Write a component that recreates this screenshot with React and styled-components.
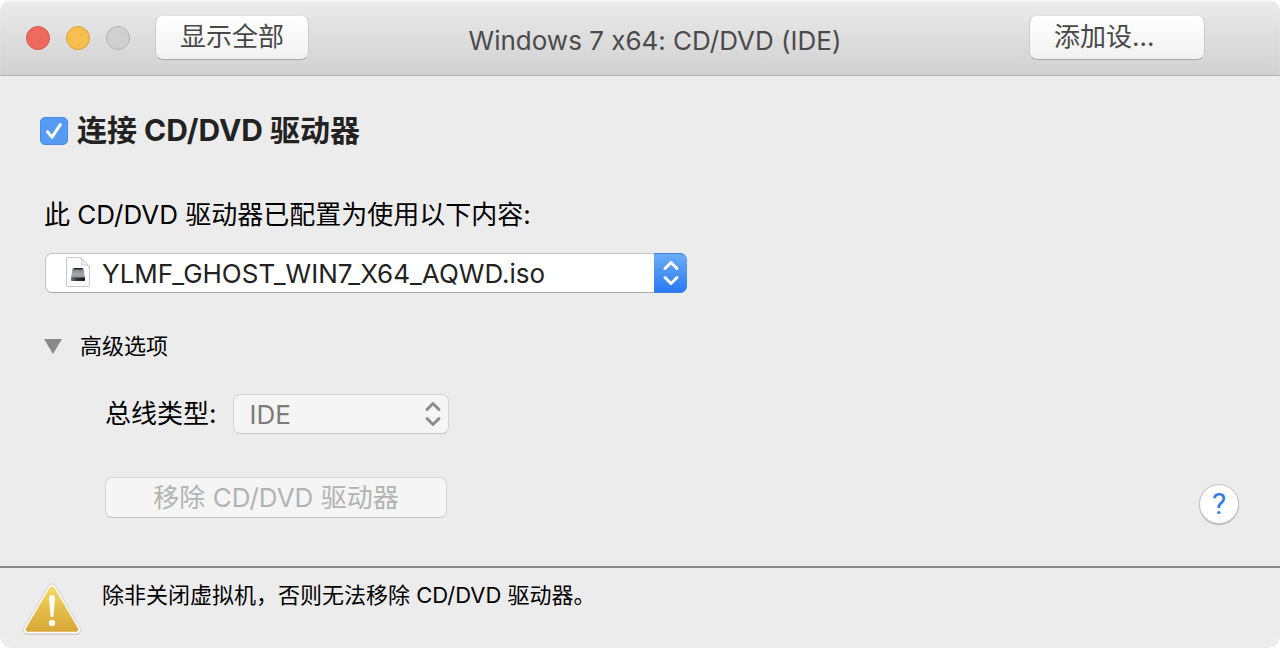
import { useState } from 'react';
import styled, { createGlobalStyle, css } from 'styled-components';

const App = () => {
	const [connected, setConnected] = useState(true);
	const [expanded, setExpanded] = useState(true);

	return (
		<>
			<GlobalStyle />
			<Window>
				<TitleBar>
					<Lights>
						<Light type="button" aria-label="关闭" $color="#ee6a5f" $edge="#d5564c" />
						<Light type="button" aria-label="最小化" $color="#f6bf50" $edge="#d9a13c" />
						<Light type="button" aria-label="缩放" $color="#d0d0d0" $edge="#b2b2b2" disabled />
					</Lights>
					<ToolButton type="button">显示全部</ToolButton>
					<Title>Windows 7 x64: CD/DVD (IDE)</Title>
					<ToolButton type="button" $wide>
						添加设…
					</ToolButton>
				</TitleBar>

				<Content>
					<CheckRow>
						<Checkbox
							type="checkbox"
							id="connect"
							checked={connected}
							onChange={(e) => setConnected(e.target.checked)}
						/>
						<Tick viewBox="0 0 28 28" aria-hidden="true">
							{connected && <path d="M7.5 14.8 12 20.2 20.3 7.6" />}
						</Tick>
						<CheckLabel htmlFor="connect">连接 CD/DVD 驱动器</CheckLabel>
					</CheckRow>

					<SourceLabel htmlFor="source">此 CD/DVD 驱动器已配置为使用以下内容:</SourceLabel>
					<SourceBox>
						<SourceSelect id="source">
							<option>YLMF_GHOST_WIN7_X64_AQWD.iso</option>
						</SourceSelect>
						<DiscFile />
						<BlueArrows>
							<Arrows color="#fff" />
						</BlueArrows>
					</SourceBox>

					<Disclosure type="button" aria-expanded={expanded} onClick={() => setExpanded(!expanded)}>
						<svg width="18" height="15" viewBox="0 0 18 15" aria-hidden="true">
							<path d="M0 0h18L9 15z" fill="#8a8a8a" />
						</svg>
						高级选项
					</Disclosure>

					{expanded && (
						<Advanced>
							<Field>
								<FieldLabel htmlFor="bus">总线类型:</FieldLabel>
								<BusBox>
									<BusSelect id="bus" disabled>
										<option>IDE</option>
									</BusSelect>
									<GreyArrows>
										<Arrows color="#8c8c8c" />
									</GreyArrows>
								</BusBox>
							</Field>
							<ActionRow>
								<RemoveButton type="button" disabled>
									移除 CD/DVD 驱动器
								</RemoveButton>
								<HelpButton type="button">?</HelpButton>
							</ActionRow>
						</Advanced>
					)}
				</Content>

				<Footer>
					<Warning />
					<Message>除非关闭虚拟机，否则无法移除 CD/DVD 驱动器。</Message>
				</Footer>
			</Window>
		</>
	);
};

const Arrows = ({ color }) => (
	<svg width="18" height="28" viewBox="0 0 18 28" fill="none" stroke={color} strokeWidth="3" strokeLinecap="round" strokeLinejoin="round" aria-hidden="true">
		<path d="M3 9.5 9 3.5l6 6M3 18.5l6 6 6-6" />
	</svg>
);

const DiscFile = () => (
	<FileIcon viewBox="0 0 26 32" aria-hidden="true">
		<defs>
			<linearGradient id="drive" x1="0" y1="0" x2="0" y2="1">
				<stop offset="0" stopColor="#6f7a84" />
				<stop offset="0.6" stopColor="#a4abb1" />
				<stop offset="1" stopColor="#8a9095" />
			</linearGradient>
			<linearGradient id="front" x1="0" y1="0" x2="1" y2="0">
				<stop offset="0" stopColor="#77736b" />
				<stop offset="0.4" stopColor="#3a3a3a" />
				<stop offset="1" stopColor="#151515" />
			</linearGradient>
		</defs>
		<path d="M2.5 1.5h13l9 9v19q0 1-1 1h-21q-1 0-1-1v-27q0-1 1-1z" fill="#fcfcfc" stroke="#c8c8c8" />
		<path d="M15.5 1.5q2.500 3.500 1 7.500 4-.8 8 1.500z" fill="#f3f3f3" stroke="#cdcdcd" />
		<path d="M8.500 12h9q.8 0 1 .8L20 22H6l1.500-9.200q.2-.8 1-.8z" fill="url(#drive)" />
		<path d="M9 12h8.500v1.500H9z" fill="#20252a" />
		<path d="M6 21.500h14V24q0 1-1 1H7q-1 0-1-1z" fill="url(#front)" />
	</FileIcon>
);

const Warning = () => (
	<WarningIcon viewBox="0 0 60 56" role="img" aria-label="警告">
		<defs>
			<linearGradient id="gold" x1="0" y1="0" x2="0" y2="1">
				<stop offset="0" stopColor="#f5dc5f" />
				<stop offset="0.5" stopColor="#e4bd49" />
				<stop offset="1" stopColor="#d8a637" />
			</linearGradient>
		</defs>
		<path d="M27 5.500Q30 .8 33 5.500L57.300 46Q60 52 54 52H6Q0 52 2.700 46Z" fill="#aaa" opacity=".5" transform="translate(0 1)" />
		<path d="M26 4.500Q30-1 34 4.500L58 45.500Q60.500 51.500 54.500 52H5.500Q-.5 51.500 2 45.500Z" fill="#faf8f0" stroke="#c8c6c0" strokeWidth=".7" />
		<path d="M27.500 6.200Q30 2.600 32.500 6.200L55.600 45.800Q57.500 49.800 53.500 49.800H6.500Q2.500 49.800 4.400 45.800Z" fill="url(#gold)" />
		<path d="M26.900 16q0-3 3.100-3t3.100 3l-1.600 17.500q-.3 1.800-1.500 1.800t-1.500-1.800z" fill="#fdfcf4" />
		<circle cx="30" cy="41" r="3.200" fill="#fdfcf4" />
	</WarningIcon>
);

const GlobalStyle = createGlobalStyle`
	* {
		box-sizing: border-box;
	}
	body {
		margin: 0;
		background: #fff;
		color: #000;
		font-family: Inter, 'Noto Sans CJK SC', sans-serif;
		font-size: 26px;
		font-variant-ligatures: no-contextual;
		line-height: 40px;
	}
	button,
	select {
		margin: 0;
		font: inherit;
		color: inherit;
	}
`;

const Window = styled.main`
	display: flex;
	flex-direction: column;
	min-height: 100vh;
	overflow: hidden;
	border-radius: 12px;
	background: #ececec;
`;

const TitleBar = styled.header`
	display: flex;
	align-items: flex-start;
	height: 76px;
	padding: 15px 75px 0 26px;
	border-bottom: 1px solid #b1b1b1;
	background: linear-gradient(#ebebeb, #d1d1d1);
	box-shadow: inset 0 2px 1px #f7f7f7;
`;

const Lights = styled.div`
	display: flex;
	gap: 16px;
	padding: 11px 25px 0 0;
`;

const Light = styled.button`
	width: 24px;
	height: 24px;
	padding: 0;
	border: 1px solid ${(p) => p.$edge};
	border-radius: 50%;
	background: ${(p) => p.$color};
`;

const ToolButton = styled.button`
	width: ${(p) => (p.$wide ? '176px' : '154px')};
	height: 45px;
	padding: 0 24px 2px;
	border: 1px solid #cbcbcb;
	border-top-color: #e3e3e3;
	border-bottom-color: #a9a9a9;
	border-radius: 8px;
	background: linear-gradient(#fff, #f1f1f1);
	color: #484848;
	text-align: ${(p) => (p.$wide ? 'left' : 'center')};
	white-space: nowrap;
`;

const Title = styled.h1`
	flex: 1;
	margin: 0;
	padding: 6px 28px 0 0;
	color: #4b4b4b;
	font-size: 26px;
	font-weight: 400;
	text-align: center;
	white-space: nowrap;
`;

const Content = styled.section`
	display: flex;
	flex: 1;
	flex-direction: column;
	align-items: flex-start;
	padding: 34px 41px 42px 40px;
`;

const CheckRow = styled.div`
	position: relative;
	display: flex;
	align-items: center;
	gap: 9px;
`;

const Checkbox = styled.input`
	appearance: none;
	width: 28px;
	height: 28px;
	margin: 2px 0 0;
	border: 1px solid #b9b9b9;
	border-radius: 5px;
	background: #fff;
	&:checked {
		border-color: #4a8be6;
		background: #559af5;
	}
`;

const Tick = styled.svg`
	position: absolute;
	left: 0;
	top: 7px;
	width: 28px;
	height: 28px;
	fill: none;
	stroke: #fff;
	stroke-width: 3;
	stroke-linecap: round;
	stroke-linejoin: round;
	pointer-events: none;
`;

const CheckLabel = styled.label`
	color: #222;
	font-size: 30px;
	font-weight: 700;
`;

const SourceLabel = styled.label`
	margin: 45px 0 18px 4px;
`;

const SourceBox = styled.div`
	position: relative;
	width: 642px;
	max-width: 100%;
	margin-left: 5px;
`;

const selectBase = css`
	display: block;
	appearance: none;
	width: 100%;
	height: 40px;
	border: 1px solid #c6c6c6;
	border-bottom-color: #aaa;
	border-radius: 7px;
	opacity: 1;
`;

const SourceSelect = styled.select`
	${selectBase}
	padding: 0 40px 0 56px;
	background: #fff;
	color: #222;
`;

const FileIcon = styled.svg`
	position: absolute;
	left: 20px;
	top: 3px;
	width: 26px;
	height: 32px;
	pointer-events: none;
`;

const BlueArrows = styled.span`
	position: absolute;
	inset: 0 0 0 auto;
	display: flex;
	align-items: center;
	justify-content: center;
	width: 33px;
	border: 1px solid #3d81e8;
	border-width: 1px 0;
	border-radius: 0 7px 7px 0;
	background: linear-gradient(#6bacf7, #2a7af5);
	pointer-events: none;
`;

const Disclosure = styled.button`
	display: flex;
	align-items: center;
	gap: 18px;
	margin: 33px 0 0 4px;
	padding: 0;
	border: 0;
	background: none;
	font-size: 22px;
	&[aria-expanded='false'] svg {
		transform: rotate(-90deg);
	}
`;

const Advanced = styled.div`
	align-self: stretch;
	padding: 28px 0 0 65px;
`;

const Field = styled.div`
	display: flex;
	align-items: center;
	gap: 16px;
`;

const FieldLabel = styled.label`
	white-space: nowrap;
`;

const BusBox = styled.div`
	position: relative;
	width: 216px;
`;

const BusSelect = styled.select`
	${selectBase}
	padding: 0 40px 0 16px;
	border-color: #d6d6d6;
	border-bottom-color: #c3c3c3;
	background: #f5f5f5;
	color: #7b7b7b;
`;

const GreyArrows = styled.span`
	position: absolute;
	inset: 0 7px 0 auto;
	display: flex;
	align-items: center;
	pointer-events: none;
`;

const ActionRow = styled.div`
	display: flex;
	align-items: flex-start;
	justify-content: space-between;
	margin-top: 43px;
`;

const RemoveButton = styled.button`
	width: 342px;
	height: 41px;
	padding: 0 0 2px;
	border: 1px solid #d6d6d6;
	border-bottom-color: #c3c3c3;
	border-radius: 7px;
	background: #f5f5f5;
	color: #b3b3b3;
`;

const HelpButton = styled.button`
	width: 40px;
	height: 40px;
	margin-top: 7px;
	padding: 0;
	border: 1px solid #c4c4c4;
	border-radius: 50%;
	background: #fff;
	box-shadow: 0 1px 1px #bbb;
	color: #2f7bea;
	font-family: Roboto, sans-serif;
	font-size: 30px;
	font-weight: 400;
	line-height: 38px;
`;

const Footer = styled.footer`
	display: flex;
	align-items: flex-start;
	gap: 20px;
	min-height: 82px;
	padding: 7px 22px 0;
	border-top: 2px solid #898989;
	font-size: 22px;
`;

const WarningIcon = styled.svg`
	flex: none;
	width: 60px;
	height: 56px;
	margin-top: 7px;
`;

const Message = styled.p`
	margin: 0;
`;

export default App;
